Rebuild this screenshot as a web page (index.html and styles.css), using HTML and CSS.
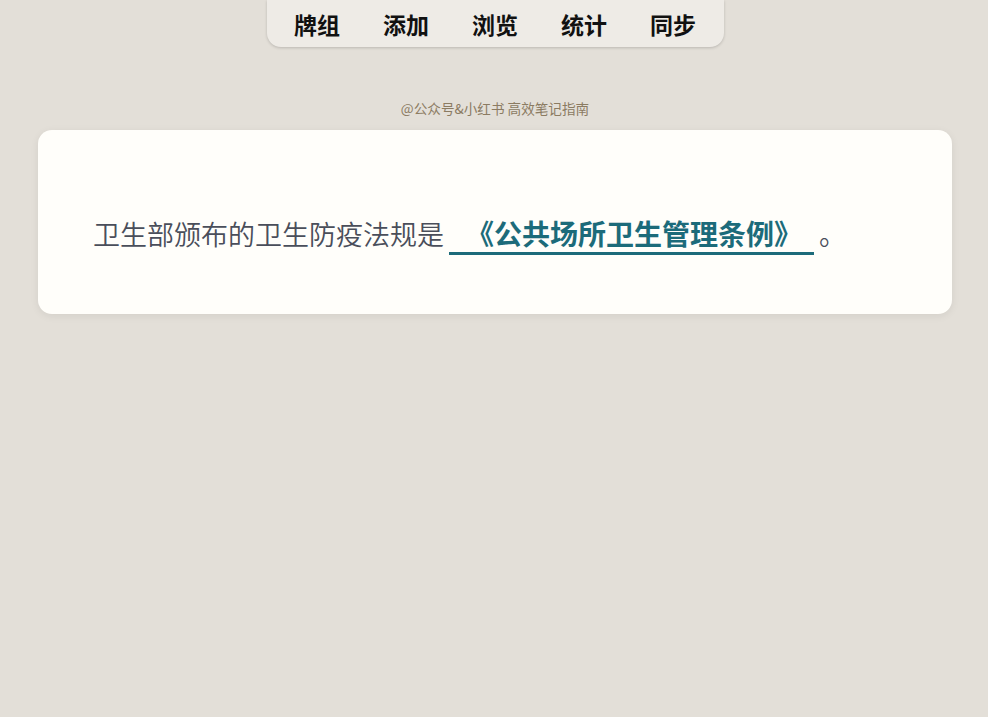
FILE: index.html
```html
<!DOCTYPE html>
<html lang="zh-CN">
  <head>
    <meta charset="UTF-8" />
    <meta name="viewport" content="width=device-width, initial-scale=1.0" />
    <title>卡片</title>
    <link rel="stylesheet" href="styles.css">
  </head>
  <body>
    <div class="container">
      <!-- 顶部导航 -->
      <nav class="nav">
        <a href="#">牌组</a>
        <a href="#">添加</a>
        <a href="#">浏览</a>
        <a href="#">统计</a>
        <a href="#">同步</a>
      </nav>

      <p class="credit">@公众号&amp;小红书 高效笔记指南</p>

      <!-- 卡片 -->
      <main class="card">
        <p class="question">卫生部颁布的卫生防疫法规是<span class="cloze">《公共场所卫生管理条例》</span>。</p>
      </main>
    </div>
  </body>
</html>
```

FILE: styles.css
```css
* {
  margin: 0;
  padding: 0;
  box-sizing: border-box;
}
a {
  text-decoration: none;
  color: #111;
}
body {
  background: #e3dfd8;
  font-family: "Noto Sans CJK SC", "Noto Sans", sans-serif;
}

.container {
  width: 100vw;
  min-height: 100vh;
  padding: 0 36px 0 38px;
  display: flex;
  flex-direction: column;
  align-items: center;
}

/* 导航 */
.nav {
  height: 47px;
  padding: 0 6px;
  background: #eeebe6;
  border-radius: 0 0 14px 14px;
  box-shadow: 0 1px 3px rgba(0, 0, 0, 0.18);
  display: flex;
  align-items: center;
}
.nav a {
  width: 89px;
  text-align: center;
  font-size: 23px;
  font-weight: 700;
  line-height: 47px;
  padding-top: 2px;
}

.credit {
  margin-top: 49px;
  font-size: 13.6px;
  line-height: 24px;
  color: #8b7b62;
}

/* 卡片 */
.card {
  margin-top: 10px;
  width: 100%;
  height: 184px;
  background: #fffefa;
  border-radius: 14px;
  box-shadow: 0 2px 8px rgba(0, 0, 0, 0.07);
  padding: 86px 55px 0;
}
.question {
  font-size: 27px;
  line-height: 36px;
  font-weight: 350;
  color: #4a4e5a;
}
.cloze {
  display: inline-block;
  margin: 0 5px 0 5px;
  padding: 0 12px 2px 17px;
  font-size: 28px;
  line-height: 33px;
  font-weight: 700;
  color: #1c6b7a;
  border-bottom: 3px solid #1c6b7a;
}
```
